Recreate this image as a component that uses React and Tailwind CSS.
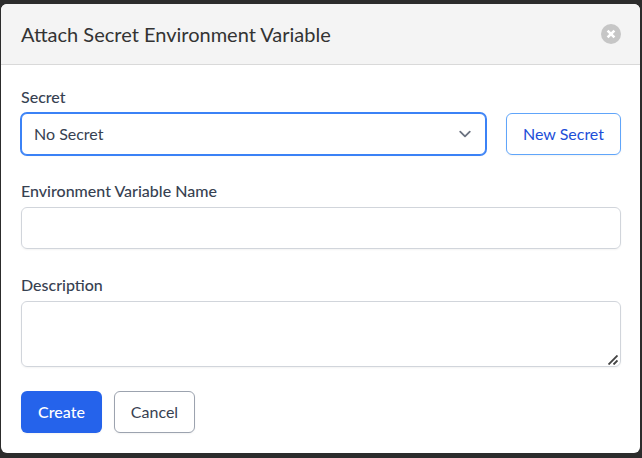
function CloseIcon() {
  return (
    <svg className="block size-5" viewBox="0 0 20 20" aria-hidden="true">
      <circle cx="10" cy="10" r="10" fill="#c6c6c6" />
      <path d="M6.6 6.6l6.8 6.8M13.4 6.6l-6.8 6.8" stroke="#fff" strokeWidth="2.6" />
    </svg>
  );
}

function ChevronDown() {
  return (
    <svg className="size-6 text-[#6b7280]" viewBox="0 0 20 20" fill="none" stroke="currentColor" aria-hidden="true">
      <path d="M6 8l4 4 4-4" strokeWidth="1.5" strokeLinecap="round" strokeLinejoin="round" />
    </svg>
  );
}

function ResizeGrip() {
  return (
    <svg className="pointer-events-none absolute right-[3px] bottom-[2px] h-[10px] w-[10px]" viewBox="0 0 10 10" aria-hidden="true">
      <path d="M0.5 9.5l9-9M5.5 9.5l4-4" stroke="#444" strokeWidth="1.9" />
    </svg>
  );
}

function Label({ htmlFor, children }) {
  return (
    <label htmlFor={htmlFor} className="block text-base font-medium text-[#374151]">
      {children}
    </label>
  );
}

export default function App() {
  return (
    <div className="h-[458px] w-[642px] overflow-hidden bg-[#2c2c2c] pt-1 pr-[2px] pb-[5px] pl-px font-['Lato',sans-serif] text-base text-[#374151]">
      <div className="h-[449px] overflow-hidden rounded-md bg-white">
        <header className="flex h-[61px] items-center justify-between border-b border-[#d9d9d9] bg-[#f4f4f4] pr-[19px] pl-5">
          <h1 className="text-xl text-[#333]">Attach Secret Environment Variable</h1>
          <button type="button" aria-label="Close">
            <CloseIcon />
          </button>
        </header>
        <form className="flex flex-col gap-6 py-5 pr-[19px] pl-5">
          <div>
            <Label htmlFor="secret">Secret</Label>
            <div className="mt-1 flex gap-5">
              <button
                id="secret"
                type="button"
                className="flex h-[42px] flex-1 items-center justify-between rounded-md border border-[#3b82f6] bg-white pr-2 pl-3 shadow-xs ring-1 ring-[#3b82f6]"
              >
                <span>No Secret</span>
                <ChevronDown />
              </button>
              <button
                type="button"
                className="h-[42px] w-[115px] rounded-md border border-[#60a5fa] bg-white text-[#1d4ed8] shadow-xs"
              >
                New Secret
              </button>
            </div>
          </div>
          <div>
            <Label htmlFor="name">Environment Variable Name</Label>
            <input id="name" className="mt-1 block h-[42px] w-full rounded-md border border-[#d1d5db] px-3 shadow-xs" />
          </div>
          <div>
            <Label htmlFor="description">Description</Label>
            <div className="relative mt-1">
              <textarea id="description" className="block h-[66px] w-full resize-none rounded-md border border-[#d1d5db] px-3 py-2 shadow-xs" />
              <ResizeGrip />
            </div>
          </div>
          <div className="flex gap-3">
            <button type="button" className="h-[42px] w-[81px] rounded-md bg-[#2563eb] font-medium text-white shadow-xs">
              Create
            </button>
            <button type="button" className="h-[42px] w-[81px] rounded-md border border-[#9ca3af] bg-white shadow-xs">
              Cancel
            </button>
          </div>
        </form>
      </div>
    </div>
  );
}
